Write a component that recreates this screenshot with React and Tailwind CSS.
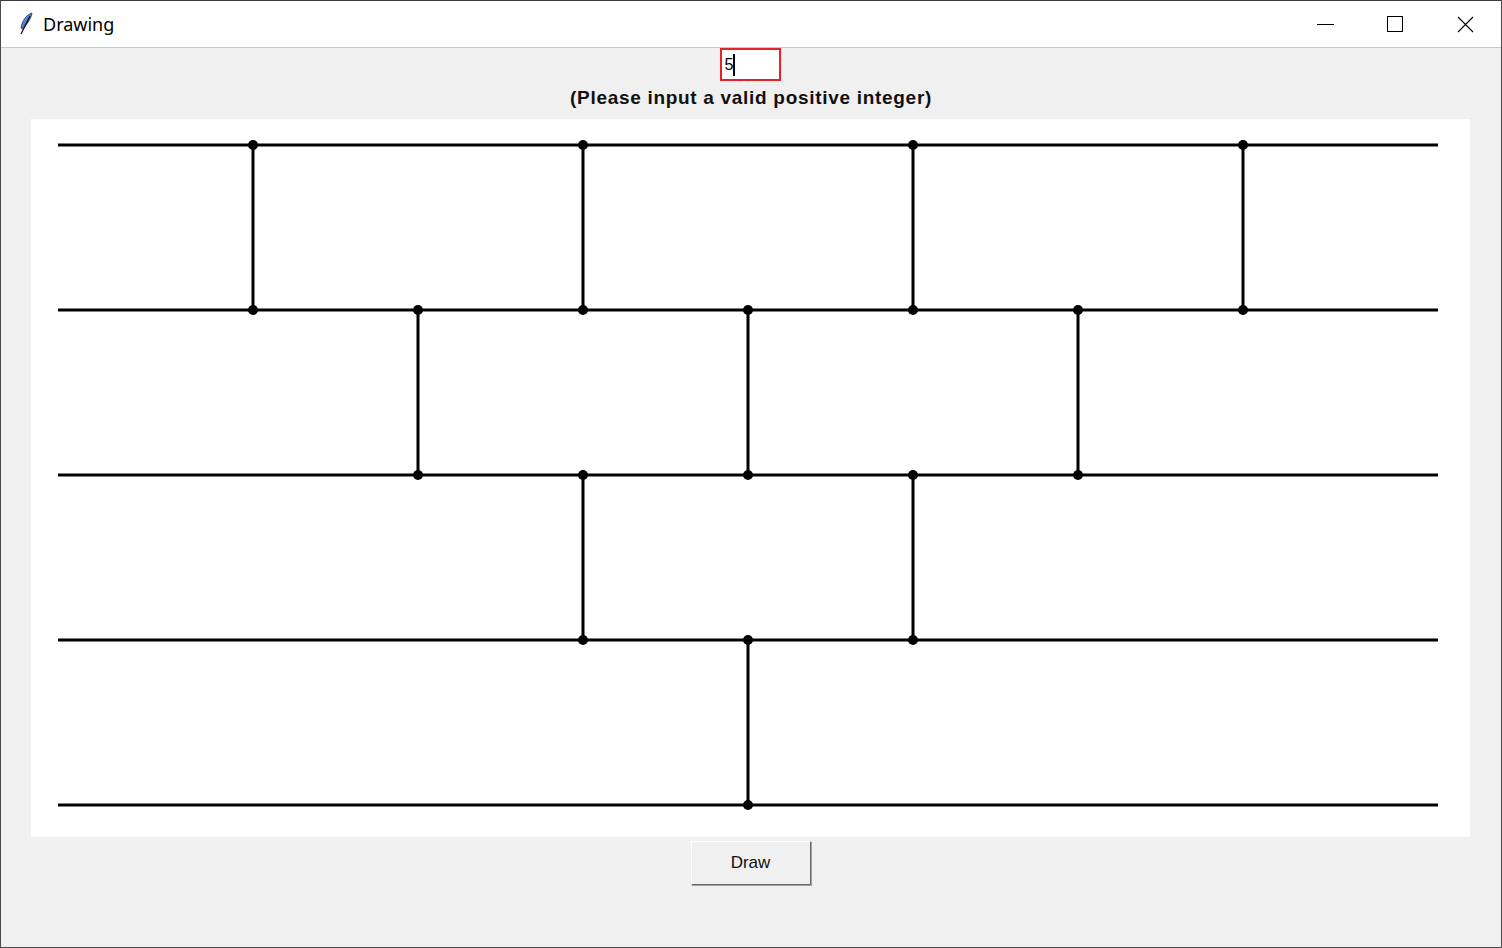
import React from "react";

// ladder geometry, in canvas coordinates
const ROWS = [26, 191, 356, 521, 686];
const COLS = [222, 387, 552, 717, 882, 1047, 1212];
const RUNGS = [
  { row: 0, cols: [0, 2, 4, 6] },
  { row: 1, cols: [1, 3, 5] },
  { row: 2, cols: [2, 4] },
  { row: 3, cols: [3] },
];

function Feather() {
  return (
    <svg width="16" height="24" viewBox="0 0 16 24">
      <defs>
        <linearGradient id="fg" x1="0" y1="0" x2="1" y2="1">
          <stop offset="0" stopColor="#7fb0ff" />
          <stop offset="1" stopColor="#1f4fa8" />
        </linearGradient>
      </defs>
      <path d="M14 1 C8 3 4 9 3 16 L5 17 C9 12 13 7 14 1 Z" fill="url(#fg)" stroke="#1b2f5a" strokeWidth="0.8" />
      <path d="M12 4 L3 22" stroke="#111" strokeWidth="1.3" />
    </svg>
  );
}

function Ladder() {
  return (
    <svg width="1439" height="718" viewBox="0 0 1439 718">
      {ROWS.map((y) => (
        <line key={`h-${y}`} x1="27" y1={y} x2="1407" y2={y} stroke="#000" strokeWidth="3" />
      ))}
      {RUNGS.map((r) =>
        r.cols.map((c) => (
          <g key={`r-${r.row}-${c}`}>
            <line x1={COLS[c]} y1={ROWS[r.row]} x2={COLS[c]} y2={ROWS[r.row + 1]} stroke="#000" strokeWidth="3" />
            <circle cx={COLS[c]} cy={ROWS[r.row]} r="5" fill="#000" />
            <circle cx={COLS[c]} cy={ROWS[r.row + 1]} r="5" fill="#000" />
          </g>
        ))
      )}
    </svg>
  );
}

export default function App() {
  return (
    <div className="w-[1502px] h-[948px] flex flex-col border-x border-b border-[#4a4a4a] bg-[#f0f0f0] overflow-hidden">
      {/* title bar */}
      <div className="h-[48px] shrink-0 flex items-center bg-white border-b border-[#c8c8c8] border-t border-t-[#3a3a3a]">
        <div className="ml-[16px] w-[18px] flex justify-center">
          <Feather />
        </div>
        <span className="ml-[8px] text-[18px] text-black" style={{ fontFamily: '"Noto Sans", "Open Sans", sans-serif' }}>
          Drawing
        </span>
        <div className="ml-auto flex items-center h-full">
          <div className="w-[70px] h-full flex items-center justify-center">
            <div className="w-[17px] h-px bg-black" />
          </div>
          <div className="w-[70px] h-full flex items-center justify-center">
            <div className="w-[16px] h-[16px] border border-black" />
          </div>
          <div className="w-[70px] h-full flex items-center justify-center mr-[1px]">
            <svg width="17" height="17" viewBox="0 0 17 17">
              <path d="M1 1 L16 16 M16 1 L1 16" stroke="#000" strokeWidth="1.1" />
            </svg>
          </div>
        </div>
      </div>

      {/* body */}
      <div className="flex flex-col items-center" style={{ fontFamily: '"Liberation Sans", Arial, sans-serif' }}>
        <div className="w-[61px] h-[33px] border-2 border-[#e8202a] bg-white flex items-center pl-[3px] ml-[-2px]">
          <span className="text-[16px] leading-none text-black">5</span>
          <span className="w-[2px] h-[22px] bg-black" />
        </div>
        <div className="mt-[5px] h-[24px] leading-[24px] text-[19px] font-bold tracking-[0.7px] text-[#111]">
          (Please input a valid positive integer)
        </div>
        <div className="mt-[9px] ml-[-2px] w-[1439px] h-[718px] bg-white">
          <Ladder />
        </div>
        <button className="mt-[4px] w-[120px] h-[44px] bg-[#f0f0f0] border border-t-white border-l-white border-r-[#6b6b6b] border-b-[#6b6b6b] shadow-[1px_1px_0_#a0a0a0] text-[17px] text-[#111] ml-[-1px]">
          Draw
        </button>
      </div>
    </div>
  );
}
